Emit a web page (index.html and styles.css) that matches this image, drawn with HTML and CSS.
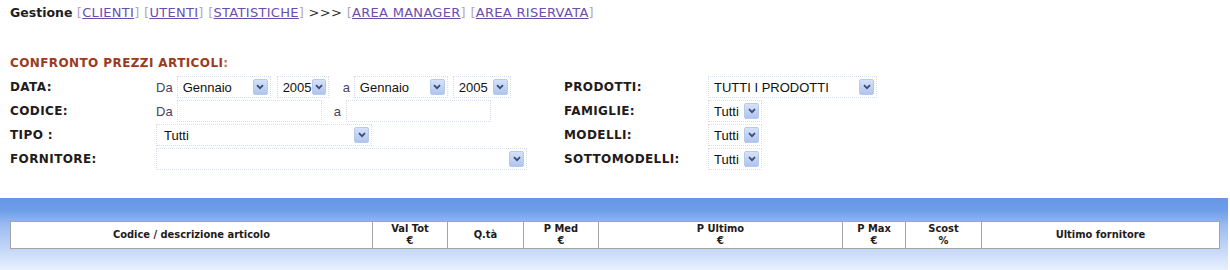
FILE: index.html
```html
<!DOCTYPE html>
<html lang="it">
<head>
    <meta charset="UTF-8">
    <title>Confronto prezzi articoli</title>
    <link rel="stylesheet" href="styles.css">
</head>
<body>
    <!-- menu gestione -->
    <div class="topnav">
        <b>Gestione</b>
        <span class="br">[</span><a href="#">CLIENTI</a><span class="br">]</span>
        <span class="br">[</span><a href="#">UTENTI</a><span class="br">]</span>
        <span class="br">[</span><a href="#">STATISTICHE</a><span class="br">]</span>
        &gt;&gt;&gt;
        <span class="br">[</span><a href="#">AREA MANAGER</a><span class="br">]</span>
        <span class="br">[</span><a href="#">AREA RISERVATA</a><span class="br">]</span>
    </div>

    <div class="title">CONFRONTO PREZZI ARTICOLI<span class="colon">:</span></div>

    <!-- filtri -->
    <div class="form">
        <div class="lbl">DATA:</div>
        <div class="field">
            <span class="txt">Da</span>
            <span class="sel w-mese ml4"><span>Gennaio</span><i class="btn"><svg width="8" height="6" viewBox="0 0 8 6"><path d="M1 1.2 L4 4.2 L7 1.2" fill="none" stroke="#3d4a72" stroke-width="1.8"/></svg></i></span>
            <span class="sel w-anno ml6"><span>2005</span><i class="btn"><svg width="8" height="6" viewBox="0 0 8 6"><path d="M1 1.2 L4 4.2 L7 1.2" fill="none" stroke="#3d4a72" stroke-width="1.8"/></svg></i></span>
            <span class="txt ml14">a</span>
            <span class="sel w-mese ml4"><span>Gennaio</span><i class="btn"><svg width="8" height="6" viewBox="0 0 8 6"><path d="M1 1.2 L4 4.2 L7 1.2" fill="none" stroke="#3d4a72" stroke-width="1.8"/></svg></i></span>
            <span class="sel w-anno2 ml5"><span>2005</span><i class="btn"><svg width="8" height="6" viewBox="0 0 8 6"><path d="M1 1.2 L4 4.2 L7 1.2" fill="none" stroke="#3d4a72" stroke-width="1.8"/></svg></i></span>
        </div>
        <div class="lbl">PRODOTTI:</div>
        <div class="field">
            <span class="sel w-prod"><span>TUTTI I PRODOTTI</span><i class="btn"><svg width="8" height="6" viewBox="0 0 8 6"><path d="M1 1.2 L4 4.2 L7 1.2" fill="none" stroke="#3d4a72" stroke-width="1.8"/></svg></i></span>
        </div>

        <div class="lbl">CODICE:</div>
        <div class="field">
            <span class="txt">Da</span>
            <span class="inp ml4"></span>
            <span class="txt ml12">a</span>
            <span class="inp ml5"></span>
        </div>
        <div class="lbl">FAMIGLIE:</div>
        <div class="field">
            <span class="sel w-tutti"><span>Tutti</span><i class="btn"><svg width="8" height="6" viewBox="0 0 8 6"><path d="M1 1.2 L4 4.2 L7 1.2" fill="none" stroke="#3d4a72" stroke-width="1.8"/></svg></i></span>
        </div>

        <div class="lbl">TIPO :</div>
        <div class="field">
            <span class="sel w-tipo"><span>Tutti</span><i class="btn"><svg width="8" height="6" viewBox="0 0 8 6"><path d="M1 1.2 L4 4.2 L7 1.2" fill="none" stroke="#3d4a72" stroke-width="1.8"/></svg></i></span>
        </div>
        <div class="lbl">MODELLI:</div>
        <div class="field">
            <span class="sel w-tutti"><span>Tutti</span><i class="btn"><svg width="8" height="6" viewBox="0 0 8 6"><path d="M1 1.2 L4 4.2 L7 1.2" fill="none" stroke="#3d4a72" stroke-width="1.8"/></svg></i></span>
        </div>

        <div class="lbl">FORNITORE:</div>
        <div class="field">
            <span class="sel w-forn"><span></span><i class="btn"><svg width="8" height="6" viewBox="0 0 8 6"><path d="M1 1.2 L4 4.2 L7 1.2" fill="none" stroke="#3d4a72" stroke-width="1.8"/></svg></i></span>
        </div>
        <div class="lbl">SOTTOMODELLI:</div>
        <div class="field">
            <span class="sel w-tutti"><span>Tutti</span><i class="btn"><svg width="8" height="6" viewBox="0 0 8 6"><path d="M1 1.2 L4 4.2 L7 1.2" fill="none" stroke="#3d4a72" stroke-width="1.8"/></svg></i></span>
        </div>
    </div>

    <!-- risultati -->
    <div class="band">
        <table class="grid">
            <colgroup>
                <col class="c-desc"><col class="c-val"><col class="c-qta"><col class="c-med">
                <col class="c-ult"><col class="c-max"><col class="c-scost"><col class="c-forn">
            </colgroup>
            <tr>
                <th>Codice / descrizione articolo</th>
                <th>Val Tot<br>€</th>
                <th>Q.tà</th>
                <th>P Med<br>€</th>
                <th>P Ultimo<br>€</th>
                <th>P Max<br>€</th>
                <th>Scost<br>%</th>
                <th>Ultimo fornitore</th>
            </tr>
        </table>
    </div>
</body>
</html>
```

FILE: styles.css
```css
/* base */
body {
    margin: 0;
    background: #fff;
    color: #222;
    font-family: "DejaVu Sans Condensed", "DejaVu Sans", sans-serif;
    height: 270px;
    overflow: hidden;
}

/* menu in alto */
.topnav {
    padding: 5px 10px 0;
    height: 20px;
    font-family: "DejaVu Sans", sans-serif;
    font-size: 13px;
    letter-spacing: 0.3px;
    line-height: 15px;
    color: #333;
}

.topnav b {
    font-size: 12.5px;
    letter-spacing: 0;
    color: #1e1e1e;
}

.topnav a {
    color: #6c4cae;
    text-decoration: underline;
}

.topnav .br {
    color: #b2a6c8;
}

/* titolo sezione */
.title {
    margin-top: 31px;
    padding-left: 10px;
    font-family: "DejaVu Sans", sans-serif;
    font-weight: bold;
    font-size: 12px;
    letter-spacing: 0.4px;
    line-height: 14px;
    color: #9c3a22;
}

.title .colon {
    color: #c07060;
}

/* griglia filtri */
.form {
    display: grid;
    grid-template-columns: 146px 408px 144px 1fr;
    grid-auto-rows: 22px;
    row-gap: 2px;
    margin-top: 6px;
    padding-left: 10px;
}

.lbl {
    display: flex;
    align-items: center;
    font-family: "DejaVu Sans", sans-serif;
    font-weight: bold;
    font-size: 12px;
    letter-spacing: 0.4px;
    color: #231a1a;
}

.field {
    display: flex;
    align-items: center;
    font-family: "Liberation Sans", Arial, sans-serif;
    font-size: 13px;
}

.txt {
    color: #4a4060;
}

.sel, .inp {
    box-sizing: border-box;
    height: 22px;
    border: 1px dotted #d6dcee;
    background: #fff;
}

.sel {
    display: inline-flex;
    align-items: center;
    justify-content: space-between;
    padding: 0 2px 0 5px;
    color: #111;
}

.inp {
    width: 145px;
}

.btn {
    display: flex;
    align-items: center;
    justify-content: center;
    box-sizing: border-box;
    width: 15px;
    height: 16px;
    border: 1px solid #b9c9ec;
    border-radius: 2px;
    background: linear-gradient(#d6e2f9, #aec4ef);
}

.w-mese { width: 94px; }
.w-anno { width: 52px; }
.w-anno2 { width: 58px; }
.w-tipo { width: 216px; padding-left: 7px; }
.w-forn { width: 371px; }
.w-prod { width: 169px; }
.w-tutti { width: 54px; }

.ml4 { margin-left: 4px; }
.ml5 { margin-left: 5px; }
.ml6 { margin-left: 6px; }
.ml12 { margin-left: 12px; }
.ml14 { margin-left: 14px; }

/* fascia tabella */
.band {
    margin-top: 28px;
    margin-right: 2px;
    height: 72px;
    padding: 23px 0 0 10px;
    box-sizing: border-box;
    background: linear-gradient(#6796e6 0, #6d9de9 12px, #9dbcf1 28px, #c6d8f8 52px, #e8f0fd 72px);
}

.grid {
    table-layout: fixed;
    width: 1209px;
    border-collapse: collapse;
    background: #fff;
}

.grid th {
    height: 26px;
    padding: 0;
    border: 1px solid #a4a4a4;
    font-size: 11px;
    line-height: 12px;
    font-weight: bold;
    color: #231a1a;
    text-align: center;
}

.c-desc { width: 362px; }
.c-val { width: 75px; }
.c-qta { width: 76px; }
.c-med { width: 75px; }
.c-ult { width: 244px; }
.c-max { width: 63px; }
.c-scost { width: 76px; }
.c-forn { width: 238px; }
```
